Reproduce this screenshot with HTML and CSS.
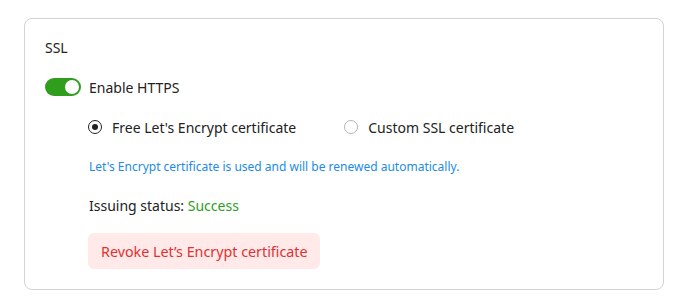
FILE: index.html
```html
<!DOCTYPE html>
<html lang="en">
<head>
  <meta charset="UTF-8">
  <meta name="viewport" content="width=device-width, initial-scale=1">
  <title>SSL</title>
  <link rel="stylesheet" href="styles.css">
</head>
<body>

  <div class="card">
    <div class="card-title">SSL</div>

    <label class="switch-row">
      <span class="switch on"><span class="knob"></span></span>
      <span>Enable HTTPS</span>
    </label>

    <div class="ssl-options">
      <div class="radio-group">
        <label class="radio-option">
          <span class="radio checked"></span>
          <span>Free Let's Encrypt certificate</span>
        </label>
        <label class="radio-option">
          <span class="radio"></span>
          <span>Custom SSL certificate</span>
        </label>
      </div>

      <p class="hint">Let's Encrypt certificate is used and will be renewed automatically.</p>

      <p class="status">Issuing status: <span class="success">Success</span></p>

      <button class="btn-danger">Revoke Let’s Encrypt certificate</button>
    </div>
  </div>

</body>
</html>
```

FILE: styles.css
```css
* {
  box-sizing: border-box;
}

body {
  font-family: "Noto Sans", sans-serif;
  font-size: 14px;
  color: #222;
  margin: 0;
  padding: 0;
  background: #fff;
}

.card {
  width: 640px;
  margin: 18px 0 0 24px;
  padding: 19px 20px 20px;
  border: 1px solid #d3d3d3;
  border-radius: 8px;
}

.card-title {
  line-height: 20px;
  margin-bottom: 19px;
}

.switch-row {
  display: flex;
  align-items: center;
  gap: 8px;
  height: 20px;
}

.switch {
  position: relative;
  width: 36px;
  height: 18px;
  border-radius: 9px;
  background-color: #ccc;
}

.switch.on {
  background-color: #2f9e1c;
}

.knob {
  position: absolute;
  top: 2px;
  left: 2px;
  width: 14px;
  height: 14px;
  border-radius: 50%;
  background-color: #fff;
}

.switch.on .knob {
  left: 20px;
}

.ssl-options {
  padding-left: 44px;
}

.radio-group {
  display: flex;
  gap: 48px;
  margin-top: 20px;
  margin-left: -1px;
}

.radio-option {
  display: flex;
  align-items: center;
  gap: 10px;
  height: 20px;
}

.radio {
  position: relative;
  width: 14px;
  height: 14px;
  border: 1px solid #b8b8b8;
  border-radius: 50%;
}

.radio.checked {
  border-color: #222;
}

.radio.checked::after {
  content: "";
  position: absolute;
  top: 3px;
  left: 3px;
  width: 6px;
  height: 6px;
  border-radius: 50%;
  background-color: #222;
}

.hint {
  margin: 22px 0 0;
  font-size: 12px;
  line-height: 16px;
  color: #228be6;
}

.status {
  margin: 21px 0 0;
  line-height: 20px;
}

.success {
  color: #2f9e1c;
}

.btn-danger {
  display: block;
  margin: 17px 0 0 -1px;
  height: 36px;
  padding: 0 12px 0 13px;
  border: none;
  border-radius: 6px;
  background-color: #ffe9e9;
  color: #e03131;
  font-family: inherit;
  font-size: 14.3px;
  cursor: pointer;
}
```
